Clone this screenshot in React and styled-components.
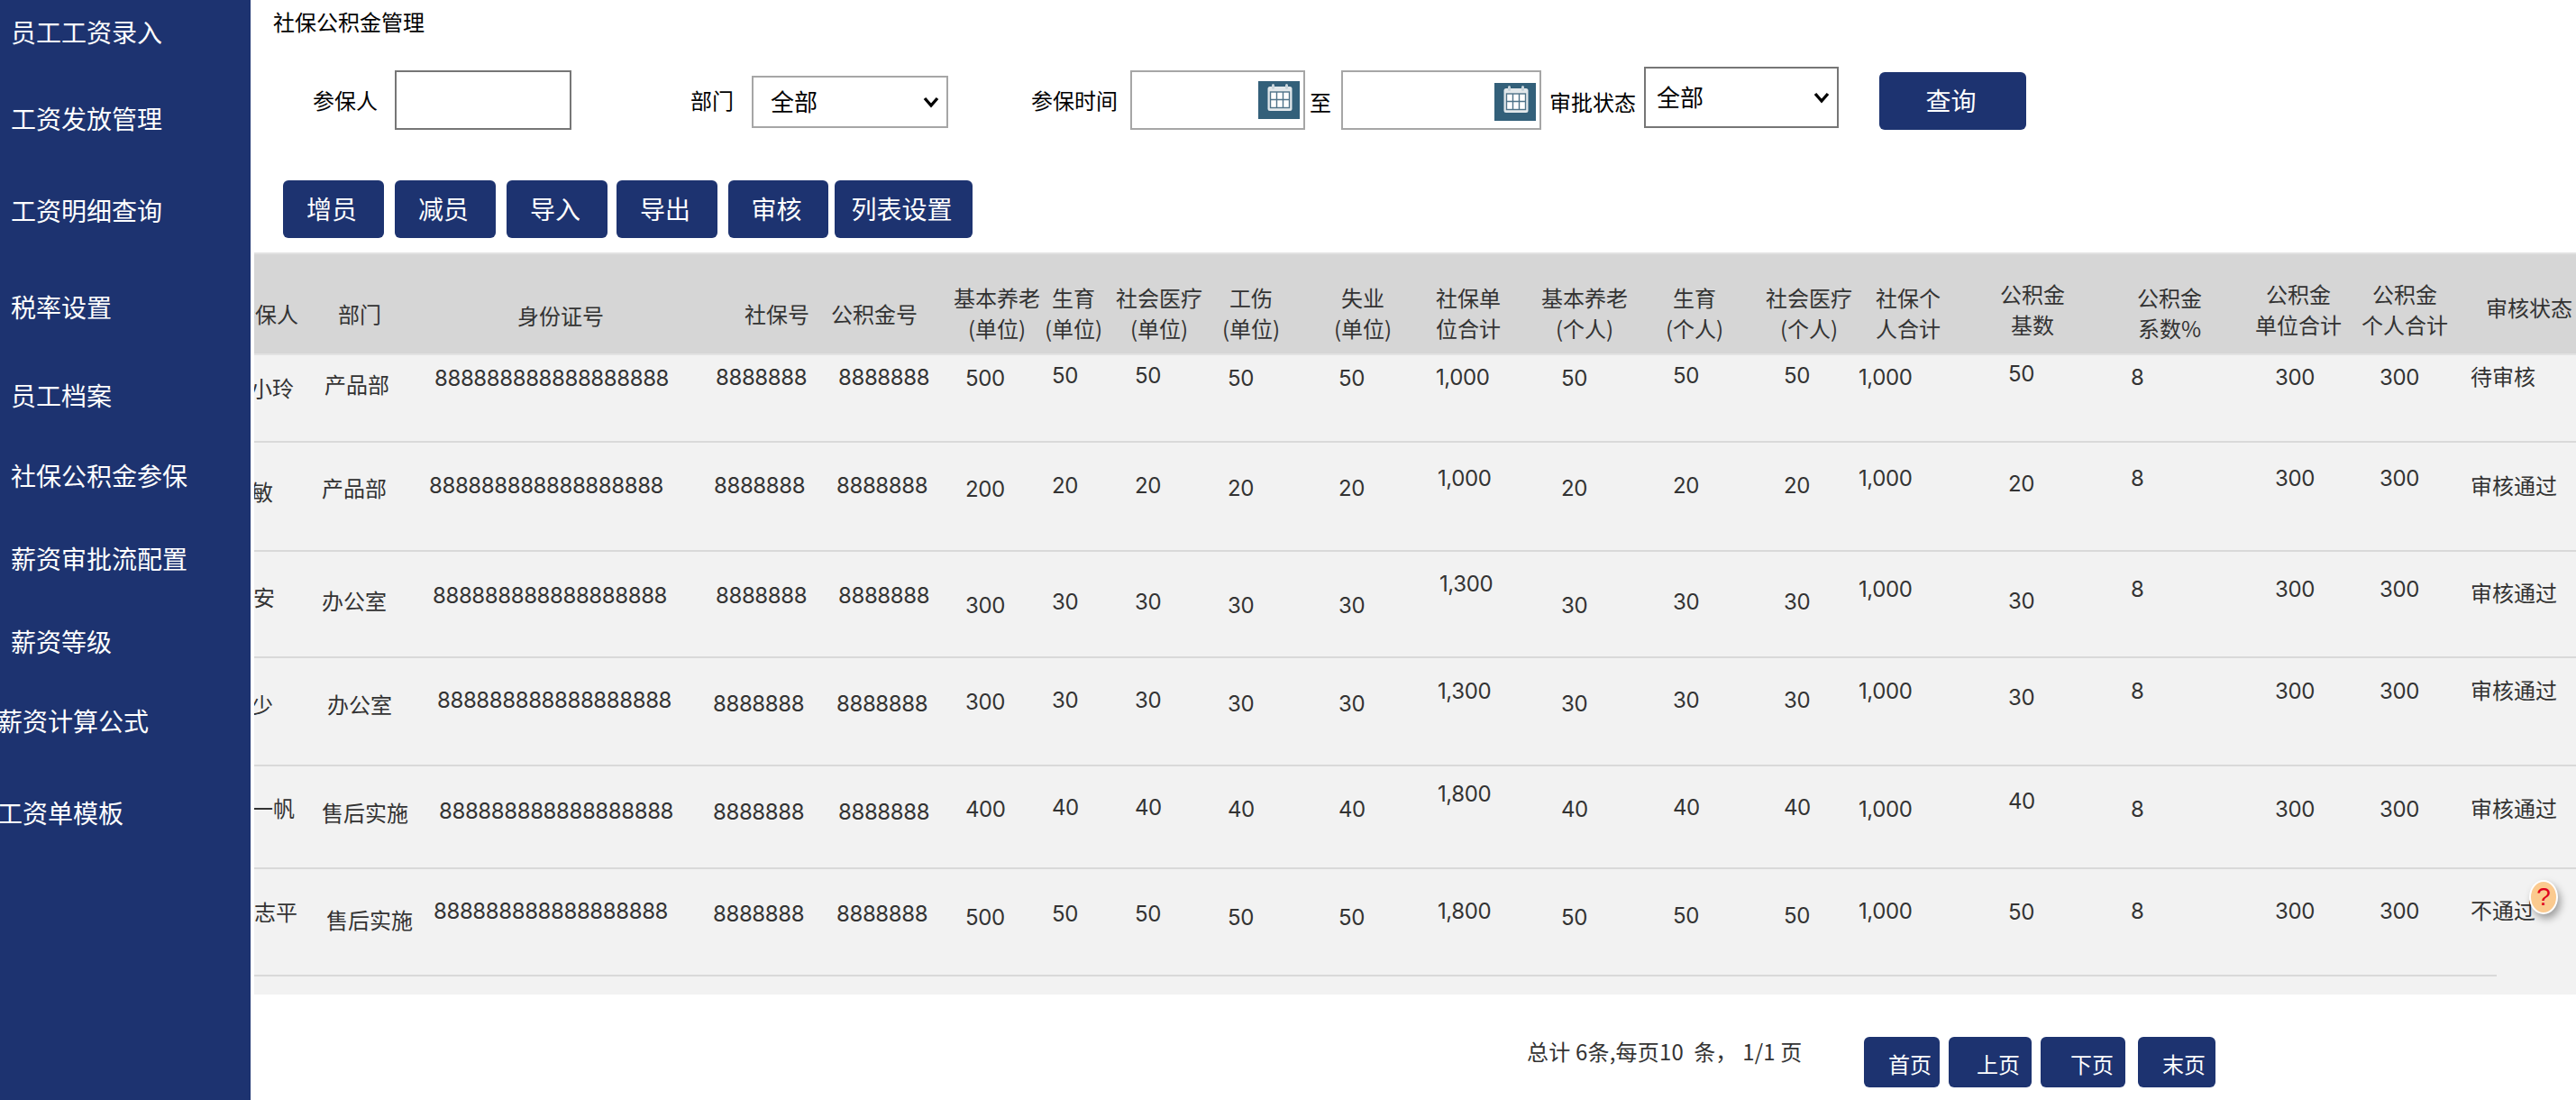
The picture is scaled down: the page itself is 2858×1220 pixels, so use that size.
import React from 'react';
import styled, { createGlobalStyle } from 'styled-components';

const NAVY = '#1d3370';
const FONT = '"Noto Sans CJK SC", "Noto Sans", sans-serif';

const GlobalStyle = createGlobalStyle`
  html, body {
    margin: 0;
    padding: 0;
    background: #fff;
    font-family: ${FONT};
  }
  * {
    box-sizing: border-box;
  }
`;

const Root = styled.div`
  display: flex;
  width: 2858px;
  height: 1220px;
  overflow: hidden;
`;

const Sidebar = styled.nav`
  flex: 0 0 278px;
  padding-top: 15px;
  background: ${NAVY};
  overflow: hidden;
`;

const MenuItem = styled.div`
  height: 40px;
  margin: ${(p) => p.$gap}px 0 0 ${(p) => p.$indent}px;
  font-size: 28px;
  line-height: 40px;
  color: #fff;
  white-space: nowrap;
`;

const Main = styled.main`
  flex: 1;
  min-width: 0;
`;

const PageTitle = styled.div`
  height: 74px;
  padding: 8px 0 0 25px;
  font-size: 24px;
  line-height: 32px;
  color: #000;
`;

const FilterRow = styled.div`
  display: flex;
  align-items: flex-start;
  height: 70px;
`;

const Label = styled.span`
  margin: ${(p) => p.$top}px 0 0 ${(p) => p.$left}px;
  font-size: 24px;
  line-height: 32px;
  color: #000;
  white-space: nowrap;
`;

const TextInput = styled.input`
  width: ${(p) => p.$width}px;
  height: 66px;
  margin: 4px 0 0 ${(p) => p.$left}px;
  border: 2px solid #767676;
  background: #fff;
  outline: none;
`;

const DateBox = styled.div`
  display: flex;
  align-items: flex-start;
  justify-content: flex-end;
  width: ${(p) => p.$width}px;
  height: 66px;
  margin: 4px 0 0 ${(p) => p.$left}px;
  padding: ${(p) => p.$iconTop}px 4px 0 0;
  border: 2px solid #a6a6a6;
`;

const SelectBox = styled.div`
  position: relative;
  width: ${(p) => p.$width}px;
  height: ${(p) => p.$height}px;
  margin: ${(p) => p.$top}px 0 0 ${(p) => p.$left}px;
`;

const Select = styled.select`
  appearance: none;
  width: 100%;
  height: 100%;
  padding: 0 0 3px ${(p) => p.$pad}px;
  border: 2px solid ${(p) => p.$border};
  border-radius: 0;
  background: #fff;
  font-family: ${FONT};
  font-size: 26px;
  color: #000;
  outline: none;
`;

const Chevron = styled.svg`
  position: absolute;
  top: 50%;
  right: 10px;
  width: 18px;
  height: 14px;
  margin-top: -7px;
  pointer-events: none;
`;

const ActionButton = styled.button`
  height: 64px;
  padding: 0 4px 3px 0;
  border: 0;
  border-radius: 6px;
  background: ${NAVY};
  font-family: ${FONT};
  font-size: 28px;
  color: #fff;
`;

const SearchButton = styled(ActionButton)`
  width: 163px;
  margin: 6px 0 0 45px;
`;

const ActionBar = styled.div`
  display: flex;
  margin: 56px 0 0 36px;
`;

const ToolButton = styled(ActionButton)`
  width: ${(p) => p.$width}px;
  margin-right: ${(p) => p.$gap}px;
`;

const Table = styled.div`
  height: 823px;
  margin: 16px 0 0 4px;
  background: #f2f2f2;
  overflow: hidden;
`;

const columns =
  '68px 120px 310px 140px 130px 100px 80px 110px 130px 110px 120px 140px 110px 100px 150px 150px 140px 120px 120px 128px';
const COLUMN_LEFT = [
  282, 350, 470, 780, 920, 1050, 1150, 1230, 1340, 1470, 1580, 1700, 1840, 1950,
  2050, 2200, 2350, 2490, 2610, 2730,
];

const HeadRow = styled.div`
  display: grid;
  grid-template-columns: ${columns};
  height: 114px;
  border-top: 2px solid #e2e2e2;
  border-bottom: 2px solid #e2e2e2;
  background: #d6d6d6;
`;

const HeadCell = styled.div`
  min-width: 0;
  padding-top: ${(p) => p.$top}px;
  padding-left: ${(p) => p.$left}px;
  font-size: 24px;
  line-height: 34px;
  color: #333;
  white-space: nowrap;
`;

const HeadText = styled.div`
  display: inline-block;
  text-align: center;
`;

const NameHead = styled(HeadCell)`
  display: flex;
  justify-content: flex-end;
  padding-left: 0;
  padding-right: 19px;
  overflow: hidden;
`;

const Row = styled.div`
  display: grid;
  grid-template-columns: ${columns};
  height: ${(p) => p.$height}px;
  border-bottom: ${(p) => (p.$last ? 'none' : '2px solid #d9d9d9')};
`;

const Cell = styled.div`
  min-width: 0;
  padding-top: ${(p) => p.$top + (p.$digits ? 2 : 0)}px;
  padding-left: ${(p) => p.$left}px;
  font-family: ${(p) => (p.$digits ? `Inter, ${FONT}` : FONT)};
  font-size: 24px;
  line-height: 32px;
  letter-spacing: ${(p) => (p.$digits ? '-0.4px' : '0')};
  color: #333;
  white-space: nowrap;
`;

const NameCell = styled(Cell)`
  display: flex;
  justify-content: flex-end;
  padding-left: 0;
  padding-right: ${(p) => p.$right}px;
  overflow: hidden;
`;

const BottomRule = styled.div`
  width: 2488px;
  height: 2px;
  background: #d9d9d9;
`;

const Pager = styled.div`
  display: flex;
  align-items: flex-start;
  margin: 47px 0 0 1416px;
`;

const PagerText = styled.div`
  width: 374px;
  font-size: 24px;
  line-height: 32px;
  letter-spacing: 0.2px;
  color: #333;
  white-space: pre;
`;

const PagerButton = styled.button`
  width: ${(p) => p.$width}px;
  height: 56px;
  margin-right: ${(p) => p.$gap}px;
  padding: 3px 0 0 ${(p) => p.$pad}px;
  border: 0;
  border-radius: 6px;
  background: ${NAVY};
  font-family: ${FONT};
  font-size: 24px;
  color: #fff;
  text-align: left;
`;

const HelpBubble = styled.div`
  position: absolute;
  top: 976px;
  left: 2806px;
  display: flex;
  align-items: center;
  justify-content: center;
  width: 32px;
  height: 38px;
  border: 2px solid #fff;
  border-radius: 50%;
  background: #fbca8f;
  box-shadow: 3px 5px 8px rgba(0, 0, 0, 0.35);
  font-family: "Liberation Sans", sans-serif;
  font-size: 28px;
  color: #e0001c;
`;

const menu = [
  ['员工工资录入', 0, 12],
  ['工资发放管理', 56, 12],
  ['工资明细查询', 62, 12],
  ['税率设置', 67, 12],
  ['员工档案', 58, 12],
  ['社保公积金参保', 49, 12],
  ['薪资审批流配置', 52, 12],
  ['薪资等级', 52, 12],
  ['薪资计算公式', 48, -3],
  ['工资单模板', 62, -3],
];

const tools = [
  ['增员', 112, 12],
  ['减员', 112, 12],
  ['导入', 112, 10],
  ['导出', 112, 12],
  ['审核', 111, 7],
  ['列表设置', 153, 0],
];

// [lines, left edge of the text, centre of the first line]
const heads = [
  [['身份证号'], 574, 352],
  [['社保号'], 826, 350],
  [['公积金号'], 922, 350],
  [['基本养老', '(单位)'], 1058, 332],
  [['生育', '(单位)'], 1159, 332],
  [['社会医疗', '(单位)'], 1238, 332],
  [['工伤', '(单位)'], 1356, 332],
  [['失业', '(单位)'], 1480, 332],
  [['社保单', '位合计'], 1593, 332],
  [['基本养老', '(个人)'], 1710, 332],
  [['生育', '(个人)'], 1848, 332],
  [['社会医疗', '(个人)'], 1959, 332],
  [['社保个', '人合计'], 2081, 332],
  [['公积金', '基数'], 2219, 328],
  [['公积金', '系数%'], 2371, 332],
  [['公积金', '单位合计'], 2502, 328],
  [['公积金', '个人合计'], 2620, 328],
  [['审核状态'], 2758, 343],
];

const ID_NO = '888888888888888888';
const NO = '8888888';

const rows = [
  {
    top: 394,
    height: 97,
    name: ['小玲', 326, 431],
    dept: ['产品部', 360, 427],
    idNo: [482, 419],
    social: [794, 418],
    fund: [930, 418],
    totalX: 1593,
    values: ['500', '50', '50', '50', '50', '1,000', '50', '50', '50', '1,000', '50', '8', '300', '300', '待审核'],
    ys: [419, 416, 416, 419, 419, 418, 419, 416, 416, 418, 414, 418, 418, 418, 418],
  },
  {
    top: 491,
    height: 121,
    name: ['敏', 303, 546],
    dept: ['产品部', 357, 542],
    idNo: [476, 538],
    social: [792, 538],
    fund: [928, 538],
    totalX: 1595,
    values: ['200', '20', '20', '20', '20', '1,000', '20', '20', '20', '1,000', '20', '8', '300', '300', '审核通过'],
    ys: [542, 538, 538, 541, 541, 530, 541, 538, 538, 530, 536, 530, 530, 530, 539],
  },
  {
    top: 612,
    height: 118,
    name: ['安', 305, 663],
    dept: ['办公室', 357, 667],
    idNo: [480, 660],
    social: [794, 660],
    fund: [930, 660],
    totalX: 1597,
    values: ['300', '30', '30', '30', '30', '1,300', '30', '30', '30', '1,000', '30', '8', '300', '300', '审核通过'],
    ys: [671, 667, 667, 671, 671, 647, 671, 667, 667, 653, 666, 653, 653, 653, 658],
  },
  {
    top: 730,
    height: 120,
    name: ['少', 303, 782],
    dept: ['办公室', 363, 782],
    idNo: [485, 776],
    social: [791, 780],
    fund: [928, 780],
    totalX: 1595,
    values: ['300', '30', '30', '30', '30', '1,300', '30', '30', '30', '1,000', '30', '8', '300', '300', '审核通过'],
    ys: [778, 776, 776, 780, 780, 766, 780, 776, 776, 766, 773, 766, 766, 766, 766],
  },
  {
    top: 850,
    height: 114,
    name: ['一帆', 327, 897],
    dept: ['售后实施', 357, 902],
    idNo: [487, 899],
    social: [791, 900],
    fund: [930, 900],
    totalX: 1595,
    values: ['400', '40', '40', '40', '40', '1,800', '40', '40', '40', '1,000', '40', '8', '300', '300', '审核通过'],
    ys: [897, 895, 895, 897, 897, 880, 897, 895, 895, 897, 888, 897, 897, 897, 897],
  },
  {
    top: 964,
    height: 117,
    last: true,
    name: ['志平', 330, 1012],
    dept: ['售后实施', 362, 1021],
    idNo: [481, 1010],
    social: [791, 1013],
    fund: [928, 1013],
    totalX: 1595,
    values: ['500', '50', '50', '50', '50', '1,800', '50', '50', '50', '1,000', '50', '8', '300', '300', '不通过'],
    ys: [1017, 1013, 1013, 1017, 1017, 1010, 1017, 1015, 1015, 1010, 1011, 1010, 1010, 1010, 1010],
  },
];

// x of the value columns, starting at 基本养老(单位); 社保单位合计 comes from the row
const VALUE_X = [1071, 1167, 1259, 1362, 1485, null, 1732, 1856, 1979, 2062, 2228, 2364, 2524, 2640, 2741];

const pagerButtons = [
  ['首页', 84, 10, 27],
  ['上页', 92, 10, 31],
  ['下页', 94, 14, 33],
  ['末页', 86, 0, 27],
];

function CalendarIcon() {
  return (
    <svg width="46" height="42" viewBox="0 0 46 42">
      <rect width="46" height="42" fill="#33607a" />
      <rect x="10.5" y="6" width="27" height="27" rx="2.5" fill="#e2e8eb" />
      <rect x="15" y="3" width="3" height="6" rx="1.5" fill="#c9d5dc" />
      <rect x="30" y="3" width="3" height="6" rx="1.5" fill="#c9d5dc" />
      <rect x="13.5" y="12" width="21" height="17.5" fill="#fff" stroke="#4f7389" strokeWidth="1.4" />
      <path d="M20.5 12v17.5M27.5 12v17.5M13.5 20.5h21" stroke="#4f7389" strokeWidth="1.4" />
    </svg>
  );
}

function DeptSelect({ width, height, top, left, pad, border }) {
  return (
    <SelectBox $width={width} $height={height} $top={top} $left={left}>
      <Select $pad={pad} $border={border} defaultValue="all">
        <option value="all">全部</option>
      </Select>
      <Chevron viewBox="0 0 18 14">
        <path d="M2 3l7 8 7-8" fill="none" stroke="#000" strokeWidth="3.4" />
      </Chevron>
    </SelectBox>
  );
}

function DataRow({ row }) {
  const cellProps = (col, x, y) => ({
    $left: x - COLUMN_LEFT[col],
    $top: y - row.top - 17,
  });
  return (
    <Row $height={row.height} $last={row.last}>
      <NameCell $left={0} $right={350 - row.name[1]} $top={row.name[2] - row.top - 17}>
        {row.name[0]}
      </NameCell>
      <Cell {...cellProps(1, row.dept[1], row.dept[2])}>{row.dept[0]}</Cell>
      <Cell $digits {...cellProps(2, row.idNo[0], row.idNo[1])}>{ID_NO}</Cell>
      <Cell $digits {...cellProps(3, row.social[0], row.social[1])}>{NO}</Cell>
      <Cell $digits {...cellProps(4, row.fund[0], row.fund[1])}>{NO}</Cell>
      {row.values.map((value, i) => (
        <Cell
          key={i}
          $digits={i < 14}
          {...cellProps(i + 5, VALUE_X[i] === null ? row.totalX : VALUE_X[i], row.ys[i])}
        >
          {value}
        </Cell>
      ))}
    </Row>
  );
}

export default function App() {
  return (
    <Root>
      <GlobalStyle />
      <Sidebar>
        {menu.map(([label, gap, indent]) => (
          <MenuItem key={label} $gap={gap} $indent={indent}>
            {label}
          </MenuItem>
        ))}
      </Sidebar>
      <Main>
        <PageTitle>社保公积金管理</PageTitle>
        <FilterRow>
          <Label $left={69} $top={21}>参保人</Label>
          <TextInput $left={19} $width={196} />
          <Label $left={132} $top={21}>部门</Label>
          <DeptSelect width={218} height={58} top={10} left={20} pad={19} border="#a6a6a6" />
          <Label $left={92} $top={21}>参保时间</Label>
          <DateBox $left={14} $width={194} $iconTop={10}>
            <CalendarIcon />
          </DateBox>
          <Label $left={5} $top={23}>至</Label>
          <DateBox $left={11} $width={222} $iconTop={12}>
            <CalendarIcon />
          </DateBox>
          <Label $left={9} $top={23}>审批状态</Label>
          <DeptSelect width={216} height={68} top={0} left={9} pad={12} border="#767676" />
          <SearchButton>查询</SearchButton>
        </FilterRow>
        <ActionBar>
          {tools.map(([label, width, gap]) => (
            <ToolButton key={label} $width={width} $gap={gap}>
              {label}
            </ToolButton>
          ))}
        </ActionBar>
        <Table>
          <HeadRow>
            <NameHead $left={0} $top={49}>参保人</NameHead>
            <HeadCell $left={25} $top={49}>部门</HeadCell>
            {heads.map(([lines, x, y], i) => (
              <HeadCell key={i} $left={x - COLUMN_LEFT[i + 2]} $top={y - 282 - 19}>
                <HeadText>
                  {lines.map((line) => (
                    <div key={line}>{line}</div>
                  ))}
                </HeadText>
              </HeadCell>
            ))}
          </HeadRow>
          {rows.map((row) => (
            <DataRow key={row.top} row={row} />
          ))}
          <BottomRule />
        </Table>
        <Pager>
          <PagerText>总计 6条,每页10  条， 1/1 页</PagerText>
          {pagerButtons.map(([label, width, gap, pad]) => (
            <PagerButton key={label} $width={width} $gap={gap} $pad={pad}>
              {label}
            </PagerButton>
          ))}
        </Pager>
      </Main>
      <HelpBubble>?</HelpBubble>
    </Root>
  );
}
